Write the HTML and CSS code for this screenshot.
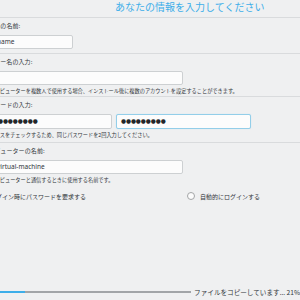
FILE: index.html
```html
<!DOCTYPE html>
<html lang="ja">
<head>
  <meta charset="UTF-8">
  <title>ユーザー情報</title>
  <link rel="stylesheet" href="styles.css">
</head>
<body>
  <div class="page">
    <h1 class="title">あなたの情報を入力してください</h1>

    <div class="section first">
      <div class="label">あなたの名前:</div>
      <div class="field short">name</div>
    </div>

    <div class="section">
      <div class="label">ユーザー名の入力:</div>
      <div class="field wide"></div>
      <div class="help">このコンピューターを複数人で使用する場合、インストール後に複数のアカウントを設定することができます。</div>
    </div>

    <div class="section pw">
      <div class="label">パスワードの入力:</div>
      <div class="pw-row">
        <div class="field dots">●●●●●●●●●</div>
        <div class="field dots focus">●●●●●●●●●</div>
      </div>
      <div class="help">タイプミスをチェックするため、同じパスワードを2回入力してください。</div>
    </div>

    <div class="section last">
      <div class="label">コンピューターの名前:</div>
      <div class="field wide">virtual-machine</div>
      <div class="help">このコンピューターと通信するときに使用する名前です。</div>
      <div class="options">
        <label class="option"><span class="radio"></span>ログイン時にパスワードを要求する</label>
        <label class="option"><span class="radio"></span>自動的にログインする</label>
      </div>
    </div>
  </div>

  <div class="footer">
    <div class="progress"><div class="progress-fill" style="width: 13%"></div></div>
    <div class="status">ファイルをコピーしています... 21%</div>
  </div>
</body>
</html>
```

FILE: styles.css
```css
body {
  margin: 0;
  width: 300px;
  height: 300px;
  overflow: hidden;
  background-color: #eff0f1;
  color: #31363b;
  font-family: "Noto Sans CJK JP", "Noto Sans", sans-serif;
  display: flex;
  flex-direction: column;
}

.page {
  margin-left: -8px;
}

/* 제목 */
.title {
  margin: 0;
  height: 17px;
  padding-left: 123px;
  font-size: 10px;
  line-height: 14px;
  font-weight: normal;
  color: #3daee9;
  border-bottom: 1px solid #d9dbdd;
  white-space: nowrap;
}

.section {
  border-bottom: 1px solid #d9dbdd;
}

.section.first {
  padding-bottom: 4px;
}

.section.pw {
  padding-bottom: 2px;
}

.section.last {
  border-bottom: none;
}

.label {
  margin-left: -10px;
  height: 15px;
  margin-bottom: 2px;
  font-size: 6px;
  line-height: 15px;
  letter-spacing: 0.1px;
  white-space: nowrap;
}

.field {
  box-sizing: border-box;
  height: 14px;
  padding: 0 4px;
  background: #fcfcfc;
  border: 1px solid #cdd0d2;
  border-radius: 2px;
  font-family: "Noto Sans", sans-serif;
  font-size: 6.5px;
  line-height: 12px;
  white-space: nowrap;
  overflow: hidden;
}

.field.short {
  width: 81px;
}

.field.wide {
  width: 191px;
}

.pw-row {
  display: flex;
  gap: 4px;
}

.field.dots {
  width: 120px;
  height: 15px;
  font-family: "DejaVu Sans", sans-serif;
  font-size: 5.8px;
  line-height: 13px;
  letter-spacing: -0.1px;
  color: #232629;
}

.field.dots:first-child {
  padding-left: 0;
}

.field.focus {
  width: 135px;
  border-color: #93cee9;
  box-shadow: 0 0 1px #b6def0;
}

.help {
  margin-left: -13px;
  height: 11px;
  font-size: 5.2px;
  line-height: 11px;
  white-space: nowrap;
}

.options {
  display: flex;
  margin-top: 4px;
  height: 14px;
  align-items: center;
}

.option {
  display: flex;
  align-items: center;
  gap: 5px;
  font-size: 6px;
  white-space: nowrap;
}

.option:first-child {
  margin-left: -15px;
  width: 210px;
}

.radio {
  width: 6px;
  height: 6px;
  border: 1px solid #a3a5a7;
  border-radius: 50%;
  background: #fcfcfc;
}

/* 진행 표시줄 */
.footer {
  margin-top: auto;
  height: 17px;
  display: flex;
  align-items: center;
  gap: 3px;
}

.progress {
  width: 202px;
  height: 2px;
  background: #a2a5a8;
}

.progress-fill {
  height: 100%;
  background: #3daee9;
}

.status {
  font-size: 6.6px;
  white-space: nowrap;
}
```
